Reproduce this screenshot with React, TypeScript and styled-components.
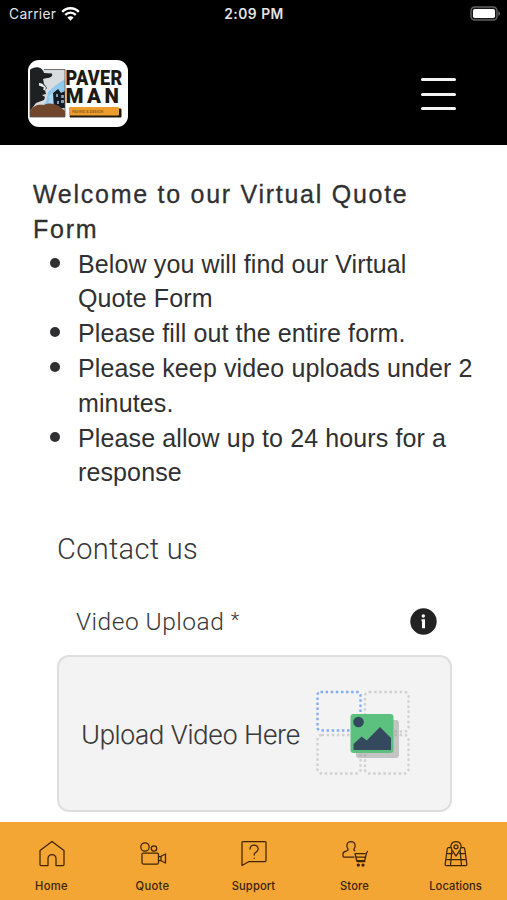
import React from "react";
import styled, { createGlobalStyle } from "styled-components";

const GlobalStyle = createGlobalStyle`
  * { box-sizing: border-box; }
  html, body { margin: 0; padding: 0; background: #fff; }
  body { font-family: "Liberation Sans", Arial, sans-serif; color: #303032; overflow: hidden; }
`;

const Screen = styled.div`
  width: 507px;
  height: 900px;
  display: flex;
  flex-direction: column;
  overflow: hidden;
  background: #fff;
`;

const StatusBar = styled.div`
  height: 28px;
  flex: none;
  display: grid;
  grid-template-columns: 1fr auto 1fr;
  align-items: center;
  padding: 0 6px 0 9px;
  background: #000;
  color: #e4e4e4;
  font: 400 13.8px/28px Inter, sans-serif;
`;

const Carrier = styled.div`
  display: flex;
  align-items: center;
  gap: 5px;
  letter-spacing: 0.3px;
`;

const Clock = styled.div`
  font-weight: 600;
  letter-spacing: 0.5px;
  margin-right: 2px;
`;

const BatterySlot = styled.div`
  display: flex;
  justify-content: flex-end;
  padding-bottom: 2px;
`;

const Header = styled.header`
  height: 117px;
  flex: none;
  display: flex;
  justify-content: space-between;
  padding: 32px 51px 0 28px;
  background: #000;
`;

const MenuButton = styled.button`
  width: 35px;
  height: 32px;
  margin-top: 18px;
  padding: 0;
  border: 0;
  background: none;
  display: flex;
  flex-direction: column;
  justify-content: space-between;
`;

const MenuBar = styled.span`
  display: block;
  width: 35px;
  height: 3px;
  border-radius: 1.5px;
  background: #f4f4f4;
`;

const Content = styled.main`
  flex: 1;
  min-height: 0;
  overflow: hidden;
  padding: 32px 24px 0 33px;
`;

const Title = styled.h1`
  margin: 0;
  font-size: 25px;
  font-weight: 400;
  line-height: 34.8px;
  letter-spacing: 1.73px;
  -webkit-text-stroke: 0.3px #303032;
`;

const Notes = styled.ul`
  margin: 0;
  padding: 0;
  list-style: none;
`;

const Note = styled.li`
  display: flex;
  font-size: 25px;
  line-height: 34.8px;
  letter-spacing: 0.12px;
  white-space: nowrap;
`;

const Bullet = styled.span`
  flex: none;
  width: 10px;
  height: 10px;
  margin: 11px 18px 0 17px;
  border-radius: 50%;
  background: #303032;
`;

const Form = styled.section`
  width: 395px;
  margin: 41px 0 0 24px;
`;

const FormTitle = styled.h2`
  margin: 0;
  font: 300 29px/36px Roboto, sans-serif;
  letter-spacing: 0.3px;
  color: #37373a;
`;

const FieldHeader = styled.div`
  display: flex;
  justify-content: space-between;
  align-items: center;
  height: 36px;
  margin-top: 36px;
  padding: 0 15px 0 19px;
`;

const FieldLabel = styled.label`
  padding-top: 2px;
  font: 300 24.5px/36px Roboto, sans-serif;
  letter-spacing: 0.5px;
  color: #37373a;
`;

const Required = styled.span`
  font-size: 20px;
  position: relative;
  top: -3px;
`;

const Dropzone = styled.div`
  display: flex;
  justify-content: space-between;
  align-items: center;
  height: 157px;
  margin-top: 16px;
  padding: 0 40px 2px 22px;
  border: 2px solid #dedede;
  border-radius: 12px;
  background: #f3f3f3;
`;

const DropText = styled.span`
  padding-top: 5px;
  font: 300 26px/32px Inter, sans-serif;
  letter-spacing: -0.6px;
  color: #3a3a3a;
  white-space: nowrap;
`;

const TabBar = styled.nav`
  height: 78px;
  flex: none;
  display: grid;
  grid-template-columns: repeat(5, 101px);
  padding: 18px 0 0 1px;
  background: #f3a634;
`;

const Tab = styled.a`
  display: flex;
  flex-direction: column;
  align-items: center;
  gap: 10px;
  color: #402400;
`;

const TabLabel = styled.span<{ $spacing: number }>`
  font: 500 11.2px/16px Inter, sans-serif;
  letter-spacing: ${(p) => p.$spacing}px;
  color: #38240c;
`;

const IconSvg = styled.svg`
  display: block;
  flex: none;
  fill: none;
  stroke: currentColor;
  stroke-width: 1.25;
  stroke-linecap: round;
  stroke-linejoin: round;
`;

const WifiIcon = () => (
  <svg width="19" height="15" viewBox="0 0 19 15" fill="none" stroke="#fff">
    <path d="M1.2 4.8C5.8 0 13.2 0 17.8 4.8" strokeWidth="2.4" />
    <path d="M4.2 7.9c3-3 7.6-3 10.6 0" strokeWidth="2.3" />
    <path d="M9.5 13.8 6.4 10.6c1.7-1.7 4.5-1.7 6.2 0z" fill="#fff" stroke="none" />
  </svg>
);

const BatteryIcon = () => (
  <svg width="31" height="15" viewBox="0 0 31 15">
    <rect x="1" y="1" width="26" height="13" rx="3.6" fill="#171717" stroke="#606060" strokeWidth="1.4" />
    <rect x="3" y="3" width="22" height="9" rx="1.8" fill="#fff" />
    <path d="M28.3 5.2c2.6 1 2.6 3.6 0 4.6z" fill="#606060" />
  </svg>
);

const Logo = () => (
  <svg width="100" height="67" viewBox="0 0 100 67" role="img" aria-label="Paver Man">
    <rect width="100" height="67" rx="11" fill="#fff" />
    <rect x="2" y="9" width="35" height="48" fill="#d9dcdf" />
    <path d="M37 19 28 25l-8 7-2 10-6 6h25z" fill="#8fc9ec" />
    <path d="M20 37c4 2 0 5-2 9h7l1-9 3-8z" fill="#a9d9f5" />
    <path d="M2 10C6 6 14 6 16 13l8 .5c1 3-2 4.5-5 4.5l-4 1 1 5 3 4-2 2 1 4-4 1 3 2-1 3-8 3-6 8z" fill="#1f2022" />
    <path d="M11 23l3 .5 4 4-1 3-2-1 1-2-5-2z" fill="#eef1f2" />
    <path d="M25 33l5-4 3 4 4-2v17H26z" fill="#141a22" />
    <path d="M28 34h2v3h-2zm5 1h3v3h-3zm-4 6h2v3h-2zm4-1h3v3h-3z" fill="#829eb0" />
    <path d="M2 51c4-6 8-7 14-6 8-4 16 1 21 6v6H2z" fill="#70472c" />
    <path d="M37 9.5H16M37 9.5V57H2V20" fill="none" stroke="#55504b" strokeWidth=".8" />
    <text transform="translate(37.5 25) scale(.86 1)" fill="#1d1a14" fontFamily="Roboto" fontWeight="900" fontSize="21" letterSpacing=".3">PAVER</text>
    <text transform="translate(37.5 42.5)" fill="#1d1a14" fontFamily="Roboto" fontWeight="900" fontSize="20.5" letterSpacing="3.4">MAN</text>
    <path d="M42 55.5V57h51v-8h-2v6.5z" fill="#231b0d" stroke="#231b0d" />
    <rect x="41" y="47" width="50" height="8.5" rx="1" fill="#ed9d2c" />
    <text x="44" y="52.5" fill="#8a5a1c" fontFamily="Inter" fontWeight="600" fontSize="3.6">PAVING &amp; DESIGN</text>
  </svg>
);

const InfoIcon = () => (
  <svg width="27" height="27" viewBox="0 0 27 27">
    <circle cx="13.5" cy="13.5" r="13.2" fill="#222" />
    <circle cx="13.3" cy="8" r="1.7" fill="#fff" />
    <path d="M11.5 11.2h3.5v9h-3v-7h-.5z" fill="#fff" />
  </svg>
);

const UploadArt = () => (
  <svg width="94" height="86" viewBox="0 0 94 86">
    <g fill="none" stroke="#d0d0d0" strokeWidth="2.3" strokeDasharray="2.5 2.6">
      <rect x="49" y="2" width="43.5" height="39.5" rx="4" />
      <rect x="1.5" y="45" width="43" height="38.5" rx="4" />
      <rect x="49" y="45" width="43.5" height="38.5" rx="4" />
      <rect x="1.5" y="2" width="43" height="38.5" rx="3" stroke="#82aaf0" />
    </g>
    <rect x="40" y="30" width="43" height="38" rx="3" fill="#969696" fillOpacity=".5" />
    <rect x="34.5" y="24" width="43" height="39" rx="3" fill="#5cc17f" />
    <circle cx="42.5" cy="32" r="5.3" fill="#34495e" />
    <path d="M37.5 60v-6l8.2-7.5 5 4 13.3-13.5 11 11v12z" fill="#34495e" />
  </svg>
);

const HomeIcon = () => (
  <IconSvg width="28" height="28" viewBox="0 0 28 28">
    <path d="M2 10.5 14 1.5l12 9v14q0 1-1 1h-7v-7q-.3-4-4-4t-4 4v7H3q-1 0-1-1z" />
  </IconSvg>
);

const CameraIcon = () => (
  <IconSvg width="28" height="28" viewBox="0 0 28 28">
    <circle cx="6" cy="7" r="4.2" />
    <circle cx="15" cy="8.5" r="2.7" />
    <rect x="3" y="13" width="16.5" height="11" rx="1.2" />
    <path d="M19.5 16.5h2l5-2.5v9l-5-2.5h-2M22 16.5v4" />
  </IconSvg>
);

const SupportIcon = () => (
  <IconSvg width="28" height="28" viewBox="0 0 28 28">
    <path d="M2 25.5v-23q0-1 1-1h22q1 0 1 1v18q0 1-1 1H9zM10 9q.2-4 4-4t4.2 3.7c0 2.3-1.8 3.2-3.2 4.3q-.8.7-.8 2M14.2 18.3v.1" />
  </IconSvg>
);

const StoreIcon = () => (
  <IconSvg width="28" height="28" viewBox="0 0 28 28">
    <path d="M13 17H3q-1 0-1-1v-2q0-2 3-2.8l2-1V9Q5.500 7 6 4.5 6.5 1.5 10 1.5t4 3Q14.5 7 13 9v1.2l.8.6" />
    <path d="M14 13.5h10M15.5 17h8.500M26.5 11.5l-1 1.5-1.8 7.5h-8L14 13.5M16 21.500h8" />
    <circle cx="17.3" cy="25" r="1" fill="currentColor" />
    <circle cx="22" cy="25" r="1" fill="currentColor" />
  </IconSvg>
);

const LocationsIcon = () => (
  <IconSvg width="28" height="28" viewBox="0 0 28 28">
    <path d="M9 7.5H6.5q-1 0-1.2 1L3.2 24q-.2 1.600 1.2 1.600h19.200q1.400 0 1.200-1.600L22.700 8.500q-.2-1-1.200-1H19M9.800 11 8.500 25.500M18.200 11l1.300 14.500M4.700 13.500h5.800M17.500 13.500h6M4 19.500h20" />
    <path d="M14 16.200 9.800 9.700C7.500 6 9.300 1.500 14 1.500s6.500 4.500 4.200 8.200z" />
    <circle cx="14" cy="6.800" r="2" />
  </IconSvg>
);

const notes: string[][] = [
  ["Below you will find our Virtual", "Quote Form"],
  ["Please fill out the entire form."],
  ["Please keep video uploads under 2", "minutes."],
  ["Please allow up to 24 hours for a", "response"],
];

const tabs = [
  { label: "Home", Icon: HomeIcon, spacing: 0.35 },
  { label: "Quote", Icon: CameraIcon, spacing: 0.3 },
  { label: "Support", Icon: SupportIcon, spacing: 0.1 },
  { label: "Store", Icon: StoreIcon, spacing: 0.15 },
  { label: "Locations", Icon: LocationsIcon, spacing: 0.05 },
];

export default function App() {
  return (
    <>
      <GlobalStyle />
      <Screen>
        <StatusBar>
          <Carrier>Carrier <WifiIcon /></Carrier>
          <Clock>2:09 PM</Clock>
          <BatterySlot><BatteryIcon /></BatterySlot>
        </StatusBar>
        <Header>
          <Logo />
          <MenuButton aria-label="Menu"><MenuBar /><MenuBar /><MenuBar /></MenuButton>
        </Header>
        <Content>
          <Title>Welcome to our Virtual Quote<br />Form</Title>
          <Notes>
            {notes.map((lines) => (
              <Note key={lines[0]}>
                <Bullet />
                <span>{lines.map((line, i) => <React.Fragment key={line}>{i > 0 && <br />}{line}</React.Fragment>)}</span>
              </Note>
            ))}
          </Notes>
          <Form>
            <FormTitle>Contact us</FormTitle>
            <FieldHeader><FieldLabel>Video Upload <Required>*</Required></FieldLabel><InfoIcon /></FieldHeader>
            <Dropzone><DropText>Upload Video Here</DropText><UploadArt /></Dropzone>
          </Form>
        </Content>
        <TabBar>
          {tabs.map(({ label, Icon, spacing }) => (
            <Tab key={label}><Icon /><TabLabel $spacing={spacing}>{label}</TabLabel></Tab>
          ))}
        </TabBar>
      </Screen>
    </>
  );
}
